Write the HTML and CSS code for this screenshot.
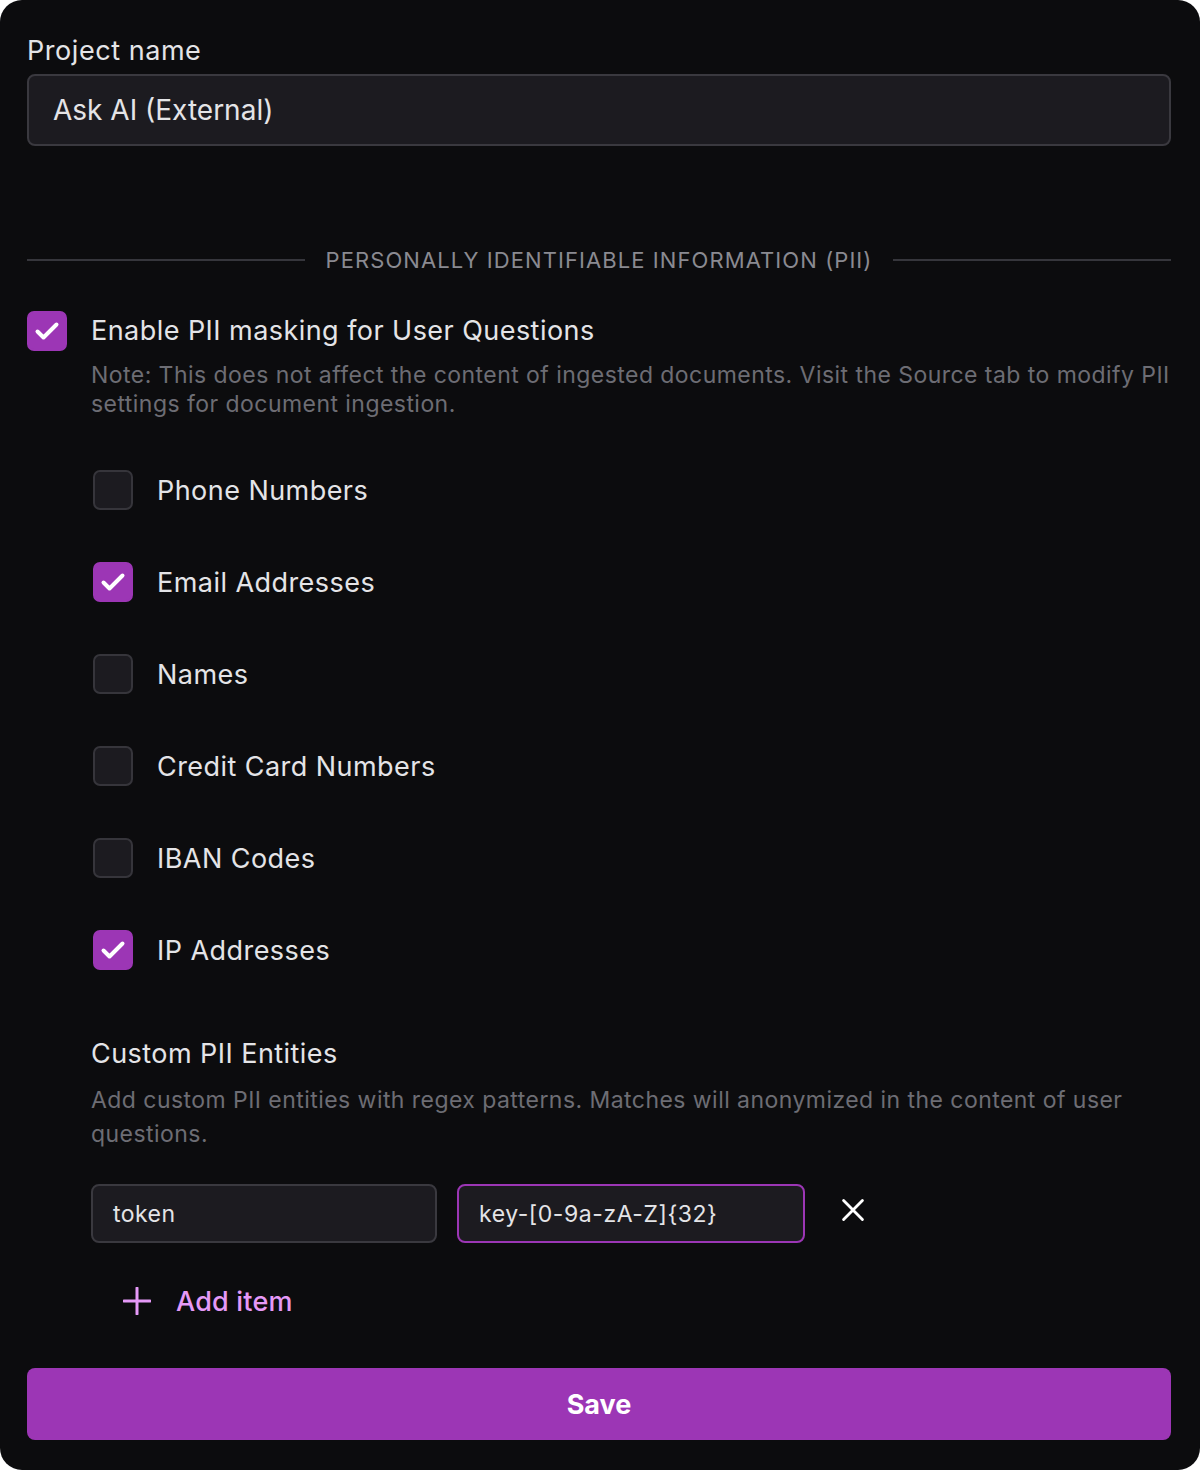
FILE: index.html
```html
<!DOCTYPE html>
<html lang="en">
<head>
<meta charset="utf-8">
<title>Project settings</title>
<link rel="stylesheet" href="styles.css">
</head>
<body>
<div class="panel">
  <label class="field-label">Project name</label>
  <div class="text-input large">Ask AI (External)</div>

  <div class="divider">
    <span class="divider-line"></span>
    <span class="divider-text">PERSONALLY IDENTIFIABLE INFORMATION (PII)</span>
    <span class="divider-line"></span>
  </div>

  <div class="master-row">
    <span class="box checked"><svg viewBox="0 0 40 40"><path d="M10.5 20.5L16.5 26.5L29.5 13.5" /></svg></span>
    <div class="master-body">
      <div class="master-label">Enable PII masking for User Questions</div>
      <div class="note">Note: This does not affect the content of ingested documents. Visit the Source tab to modify PII settings for document ingestion.</div>
    </div>
  </div>

  <div class="options">
    <div class="option"><span class="box"></span><span class="option-label">Phone Numbers</span></div>
    <div class="option"><span class="box checked"><svg viewBox="0 0 40 40"><path d="M10.5 20.5L16.5 26.5L29.5 13.5" /></svg></span><span class="option-label">Email Addresses</span></div>
    <div class="option"><span class="box"></span><span class="option-label">Names</span></div>
    <div class="option"><span class="box"></span><span class="option-label">Credit Card Numbers</span></div>
    <div class="option"><span class="box"></span><span class="option-label">IBAN Codes</span></div>
    <div class="option"><span class="box checked"><svg viewBox="0 0 40 40"><path d="M10.5 20.5L16.5 26.5L29.5 13.5" /></svg></span><span class="option-label">IP Addresses</span></div>
  </div>

  <div class="custom">
    <div class="custom-title">Custom PII Entities</div>
    <div class="custom-desc">Add custom PII entities with regex patterns. Matches will anonymized in the content of user questions.</div>
    <div class="entity-row">
      <div class="text-input small">token</div>
      <div class="text-input small focused">key-[0-9a-zA-Z]{32}</div>
      <span class="remove"><svg viewBox="0 0 28 28"><path d="M3 3L25 25M25 3L3 25" /></svg></span>
    </div>
    <div class="add-item">
      <svg viewBox="0 0 28 28"><path d="M14 1V27M1 14H27" /></svg>
      <span>Add item</span>
    </div>
  </div>

  <button class="save">Save</button>
</div>
</body>
</html>
```

FILE: styles.css
```css
* { box-sizing: border-box; }
html, body { margin: 0; padding: 0; background: #ffffff; }
body { font-family: Inter, "Noto Sans", sans-serif; }

.panel {
  width: 1200px;
  height: 1470px;
  background: #0c0c0e;
  border-radius: 22px;
  padding: 33px 29px 30px 27px;
  display: flex;
  flex-direction: column;
  color: #e4e4e7;
  letter-spacing: 0.45px;
}

.field-label {
  display: block;
  font-size: 27px;
  line-height: 35px;
  color: #e4e4e7;
  letter-spacing: 0.55px;
}

.text-input {
  background: #1c1b20;
  border: 2px solid #3a393f;
  border-radius: 8px;
  color: #e4e4e7;
  display: flex;
  align-items: center;
}
.text-input.large {
  margin-top: 6px;
  height: 72px;
  padding-left: 24px;
  font-size: 28px;
  letter-spacing: 0;
}

.divider {
  margin-top: 99px;
  display: flex;
  align-items: center;
  gap: 21px;
  height: 30px;
}
.divider-line { flex: 1; height: 2px; background: #36363c; }
.divider-text {
  font-size: 22px;
  color: #8a8a91;
  letter-spacing: 1.08px;
}

.master-row {
  margin-top: 36px;
  display: flex;
  gap: 24px;
}
.box {
  width: 40px;
  height: 40px;
  flex: none;
  border-radius: 7px;
  background: #1c1b20;
  border: 2px solid #36353b;
  display: flex;
  align-items: center;
  justify-content: center;
}
.box.checked { background: #9c36b5; border-color: #9c36b5; }
.box svg { width: 40px; height: 40px; flex: none; fill: none; stroke: #fff; stroke-width: 4; stroke-linecap: round; stroke-linejoin: round; }

.master-label { font-size: 27px; line-height: 40px; }
.note {
  margin-top: 10px;
  font-size: 23px;
  line-height: 29px;
  color: #6d6d74;
}

.options {
  margin-top: 51px;
  padding-left: 66px;
  display: flex;
  flex-direction: column;
  gap: 52px;
}
.option { display: flex; align-items: center; gap: 24px; height: 40px; }
.option-label { font-size: 27px; }

.custom { margin-top: 66px; padding-left: 64px; }
.custom-title { font-size: 27px; line-height: 36px; }
.custom-desc {
  margin-top: 11px;
  font-size: 23px;
  line-height: 34px;
  color: #6d6d74;
}
.entity-row {
  margin-top: 33px;
  display: flex;
  align-items: center;
  gap: 20px;
}
.text-input.small {
  width: 346px;
  height: 59px;
  padding-left: 20px;
  font-size: 23px;
}
.text-input.focused { border-color: #9c36b5; width: 348px; letter-spacing: 0.55px; }
.remove { margin-left: 16px; width: 26px; height: 26px; display: flex; margin-top: -6px; }
.remove svg { width: 24px; height: 24px; fill: none; stroke: #fff; stroke-width: 3.3; stroke-linecap: round; }

.add-item {
  margin-top: 28px;
  margin-left: 32px;
  display: flex;
  align-items: center;
  gap: 25px;
  height: 60px;
  color: #e599f7;
  font-size: 27px;
  font-weight: 500;
  letter-spacing: 0.2px;
}
.add-item svg { width: 28px; height: 28px; fill: none; stroke: #e599f7; stroke-width: 3; stroke-linecap: round; }

.save {
  margin-top: auto;
  height: 72px;
  width: 100%;
  border: none;
  border-radius: 8px;
  background: #9c36b5;
  color: #fff;
  font-family: Inter, "Noto Sans", sans-serif;
  font-size: 27px;
  font-weight: 700;
}
```
